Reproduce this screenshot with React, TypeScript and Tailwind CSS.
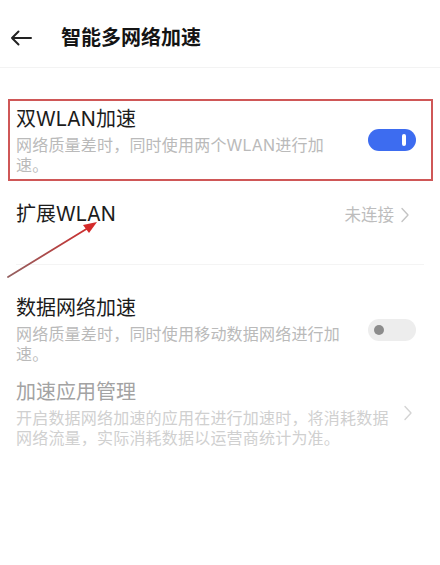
import React from "react";

function Toggle({ on }: { on: boolean }) {
  return on ? (
    <div className="relative h-[22px] w-[48px] shrink-0 rounded-full bg-[#3d6cf0]">
      <div className="absolute right-[10px] top-[5px] h-[12px] w-[4px] rounded-full bg-white" />
    </div>
  ) : (
    <div className="relative h-[22px] w-[48px] shrink-0 rounded-full bg-[#ededed]">
      <div className="absolute left-[6px] top-[6px] h-[10px] w-[10px] rounded-full bg-[#8c8c8c]" />
    </div>
  );
}

function Chevron({ color }: { color: string }) {
  return (
    <svg width="10" height="16" viewBox="0 0 10 16" fill="none">
      <path d="M2 1.5 L8 8 L2 14.5" stroke={color} strokeWidth="1.4" strokeLinecap="round" strokeLinejoin="round" />
    </svg>
  );
}

export default function App() {
  return (
    <div
      className="relative h-[565px] w-[440px] overflow-hidden bg-white"
      style={{ fontFamily: 'Inter, "Noto Sans CJK SC", sans-serif' }}
    >
      {/* Header */}
      <div className="flex h-[68px] items-center border-b border-[#f3f3f3] pt-[9px]">
        <div className="ml-[10px] flex w-[22px] items-center">
          <svg width="22" height="16" viewBox="0 0 22 16" fill="none">
            <path d="M21 8 H2 M8.5 1.5 L2 8 L8.5 14.5" stroke="#222" strokeWidth="2" strokeLinecap="round" strokeLinejoin="round" />
          </svg>
        </div>
        <div className="ml-[29px] text-[20px] font-bold leading-[26px] text-[#141414]">智能多网络加速</div>
      </div>

      {/* Dual WLAN boxed row */}
      <div className="ml-[8px] mt-[31px] flex h-[82px] w-[425px] items-center border-2 border-[#cf5757] pl-[6px] pr-[15px]">
        <div className="flex-1">
          <div className="text-[20px] leading-[26px] text-[#1c1c1c]">双WLAN加速</div>
          <div className="mt-[3px] w-[330px] text-[16px] leading-[20px] tracking-[0.2px] text-[#bababa]">
            网络质量差时，同时使用两个WLAN进行加速。
          </div>
        </div>
        <Toggle on />
      </div>

      {/* Extended WLAN */}
      <div className="mx-[16px] flex h-[84px] items-start border-b border-[#f4f4f4] pt-[20px]">
        <div className="flex-1 text-[20px] leading-[26px] text-[#1c1c1c]">扩展WLAN</div>
        <div className="mr-[14px] flex items-center gap-[6px] pt-[2px]">
          <span className="text-[16.5px] leading-[24px] text-[#bdbdbd]">未连接</span>
          <Chevron color="#c4c4c4" />
        </div>
      </div>

      {/* Mobile data acceleration */}
      <div className="mx-[16px] flex items-center pr-[8px] pt-[30px]">
        <div className="flex-1">
          <div className="text-[20px] leading-[26px] text-[#1c1c1c]">数据网络加速</div>
          <div className="mt-[3px] w-[330px] text-[16px] leading-[20px] tracking-[0.2px] text-[#bababa]">
            网络质量差时，同时使用移动数据网络进行加速。
          </div>
        </div>
        <Toggle on={false} />
      </div>

      {/* App management (disabled) */}
      <div className="mx-[16px] flex items-center pr-[11px] pt-[14px]">
        <div className="flex-1">
          <div className="text-[20px] leading-[28px] text-[#a3a3a3]">加速应用管理</div>
          <div className="mt-[2px] w-[380px] text-[16px] leading-[20px] tracking-[0.2px] text-[#d0d0d0]">
            开启数据网络加速的应用在进行加速时，将消耗数据网络流量，实际消耗数据以运营商统计为准。
          </div>
        </div>
        <Chevron color="#d4d4d4" />
      </div>

      {/* Red annotation arrow */}
      <svg className="pointer-events-none absolute left-0 top-0" width="440" height="565" viewBox="0 0 440 565">
        <defs>
          <linearGradient id="arrowGrad" x1="8" y1="277" x2="95" y2="223" gradientUnits="userSpaceOnUse">
            <stop offset="0" stopColor="#7a3a3a" stopOpacity="0.8" />
            <stop offset="1" stopColor="#d42a2a" />
          </linearGradient>
        </defs>
        <path d="M8 277 L88 228" stroke="url(#arrowGrad)" strokeWidth="1.8" strokeLinecap="round" />
        <path d="M97 222 L83 225 L89 233 Z" fill="#d42a2a" />
      </svg>
    </div>
  );
}
